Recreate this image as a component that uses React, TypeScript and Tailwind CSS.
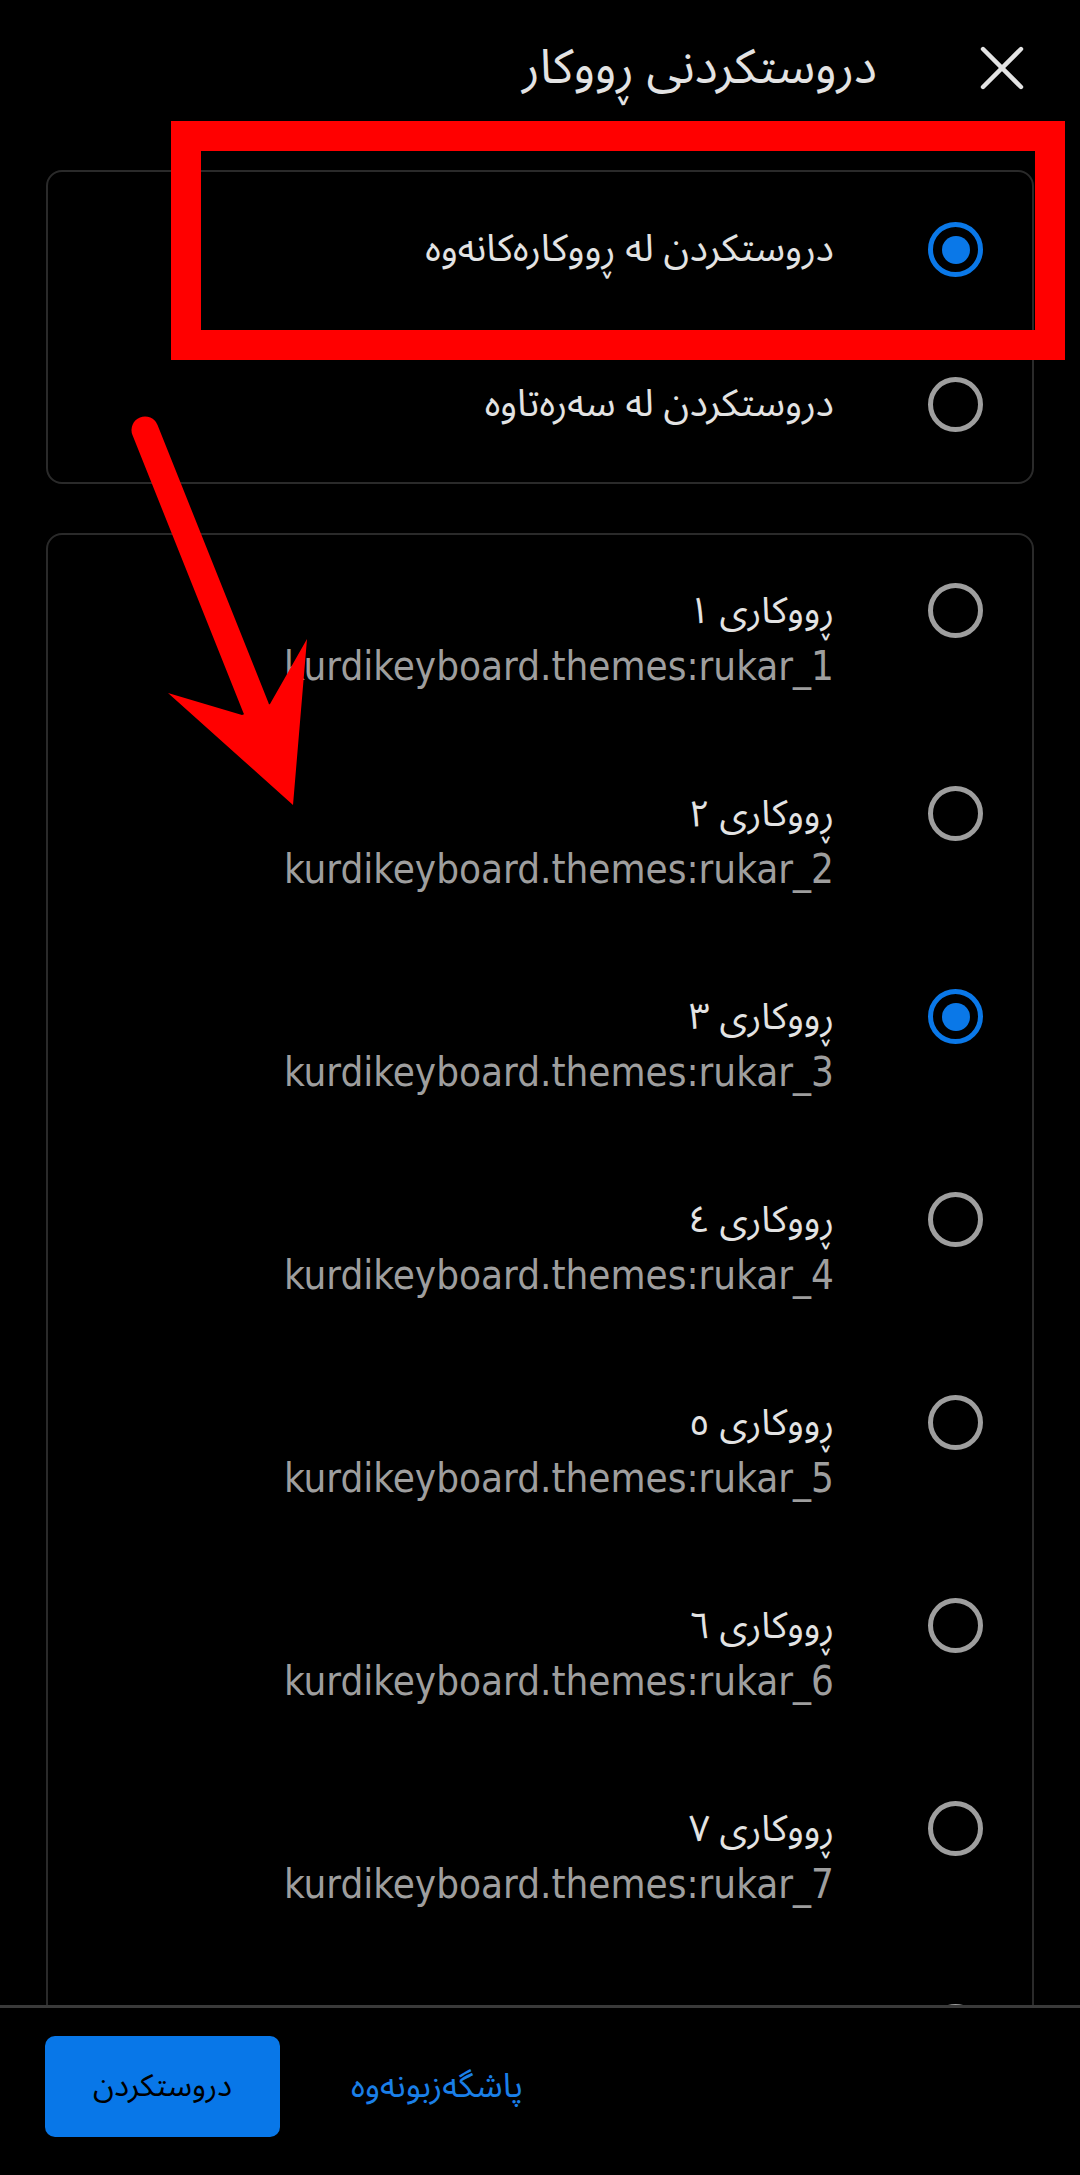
import { X } from "lucide-react";

const arabic = { fontFamily: '"Noto Sans Arabic", "DejaVu Sans", sans-serif' };
const latin = { fontFamily: '"DejaVu Sans Condensed", "DejaVu Sans", sans-serif', fontStretch: "condensed" };

const themes = [
  { label: "ڕووکاری ١", id: "kurdikeyboard.themes:rukar_1", checked: false },
  { label: "ڕووکاری ٢", id: "kurdikeyboard.themes:rukar_2", checked: false },
  { label: "ڕووکاری ٣", id: "kurdikeyboard.themes:rukar_3", checked: true },
  { label: "ڕووکاری ٤", id: "kurdikeyboard.themes:rukar_4", checked: false },
  { label: "ڕووکاری ٥", id: "kurdikeyboard.themes:rukar_5", checked: false },
  { label: "ڕووکاری ٦", id: "kurdikeyboard.themes:rukar_6", checked: false },
  { label: "ڕووکاری ٧", id: "kurdikeyboard.themes:rukar_7", checked: false },
  { label: "ڕووکاری ٨", id: "kurdikeyboard.themes:rukar_8", checked: false },
];

function Radio({ checked }: { checked: boolean }) {
  return (
    <div
      className={
        checked
          ? "w-[55px] h-[55px] shrink-0 rounded-full border-[5px] border-[#0a78e8] flex items-center justify-center"
          : "w-[55px] h-[55px] shrink-0 rounded-full border-[5px] border-[#9e9e9e]"
      }
    >
      {checked && <div className="w-[28px] h-[28px] rounded-full bg-[#0a78e8]" />}
    </div>
  );
}

function Overlay() {
  return (
    <svg
      className="absolute inset-0 pointer-events-none"
      width="1080"
      height="2175"
      viewBox="0 0 1080 2175"
    >
      <rect x="186" y="136" width="864" height="209" fill="none" stroke="#ff0000" strokeWidth="30" />
      <line x1="145" y1="430" x2="256" y2="708" stroke="#ff0000" strokeWidth="27" strokeLinecap="round" />
      <polygon points="168,693 242,715 270,704 307,639 293,805" fill="#ff0000" />
    </svg>
  );
}

export default function App() {
  return (
    <div className="relative w-[1080px] h-[2175px] bg-black flex flex-col overflow-hidden">
      {/* header */}
      <div className="h-[136px] shrink-0 flex items-center justify-end pr-[40px]">
        <h1 dir="rtl" className="text-[48px] text-[#e3e3e3] leading-none" style={arabic}>
          دروستکردنی ڕووکار
        </h1>
        <X className="ml-[87px] text-[#e3e3e3]" size={76} strokeWidth={1.4} />
      </div>

      {/* content */}
      <div className="flex-1 min-h-0 overflow-hidden px-[46px] pt-[34px] flex flex-col gap-[49px]">
        <div className="shrink-0 rounded-[16px] border-2 border-[#2a2a2a]">
          <div className="h-[155px] flex items-center justify-end pr-[49px] gap-[94px]">
            <span dir="rtl" className="text-[38px] text-[#e3e3e3]" style={arabic}>
              دروستکردن لە ڕووکارەکانەوە
            </span>
            <Radio checked />
          </div>
          <div className="h-[155px] flex items-center justify-end pr-[49px] gap-[94px]">
            <span dir="rtl" className="text-[38px] text-[#e3e3e3]" style={arabic}>
              دروستکردن لە سەرەتاوە
            </span>
            <Radio checked={false} />
          </div>
        </div>

        <div className="shrink-0 rounded-[16px] border-2 border-[#2a2a2a] pt-[48px]">
          {themes.map((t) => (
            <div key={t.id} className="h-[203px] flex items-start justify-end pr-[49px] gap-[94px]">
              <div className="flex flex-col items-end gap-[4px]">
                <span dir="rtl" className="h-[56px] flex items-center text-[37px] leading-none text-[#e3e3e3]" style={arabic}>
                  {t.label}
                </span>
                <span className="h-[46px] flex items-center text-[40px] leading-none text-[#9e9e9e]" style={latin}>
                  {t.id}
                </span>
              </div>
              <Radio checked={t.checked} />
            </div>
          ))}
        </div>
      </div>

      {/* footer */}
      <div className="h-[170px] shrink-0 border-t-[3px] border-[#3a3a3a] bg-black pt-[28px] pl-[45px] flex items-start gap-[71px]">
        <div
          dir="rtl"
          className="w-[235px] h-[101px] rounded-[10px] bg-[#0877e8] text-black text-[31px] flex items-center justify-center"
          style={arabic}
        >
          دروستکردن
        </div>
        <div dir="rtl" className="h-[101px] flex items-center text-[#1a7fe8] text-[34px]" style={arabic}>
          پاشگەزبونەوە
        </div>
      </div>

      <Overlay />
    </div>
  );
}
